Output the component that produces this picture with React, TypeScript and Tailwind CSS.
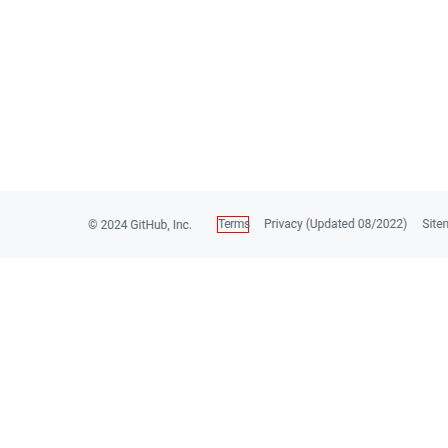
export default function App() {
  const links = ["Terms", "Privacy (Updated 08/2022)", "Sitemap", "What is Git?"];
  return (
    <div className="w-[448px] h-[448px] bg-white overflow-hidden">
      <div className="h-[191px]" />
      <footer className="h-[67px] bg-[#f6f8fa] flex items-center pl-[88px] whitespace-nowrap text-[12px] text-[#5f6872] font-['Roboto',sans-serif]">
        <span className="mr-[25px]">© 2024 GitHub, Inc.</span>
        <ul className="flex items-center gap-[15px]">
          {links.map((l, i) => (
            <li key={l}>
              <a className={i === 0 ? "block w-[32px] h-[17px] border border-[#ff0000] leading-[15px] tracking-[-0.4px]" : "block leading-[17px]"}>{l}</a>
            </li>
          ))}
        </ul>
      </footer>
    </div>
  );
}
